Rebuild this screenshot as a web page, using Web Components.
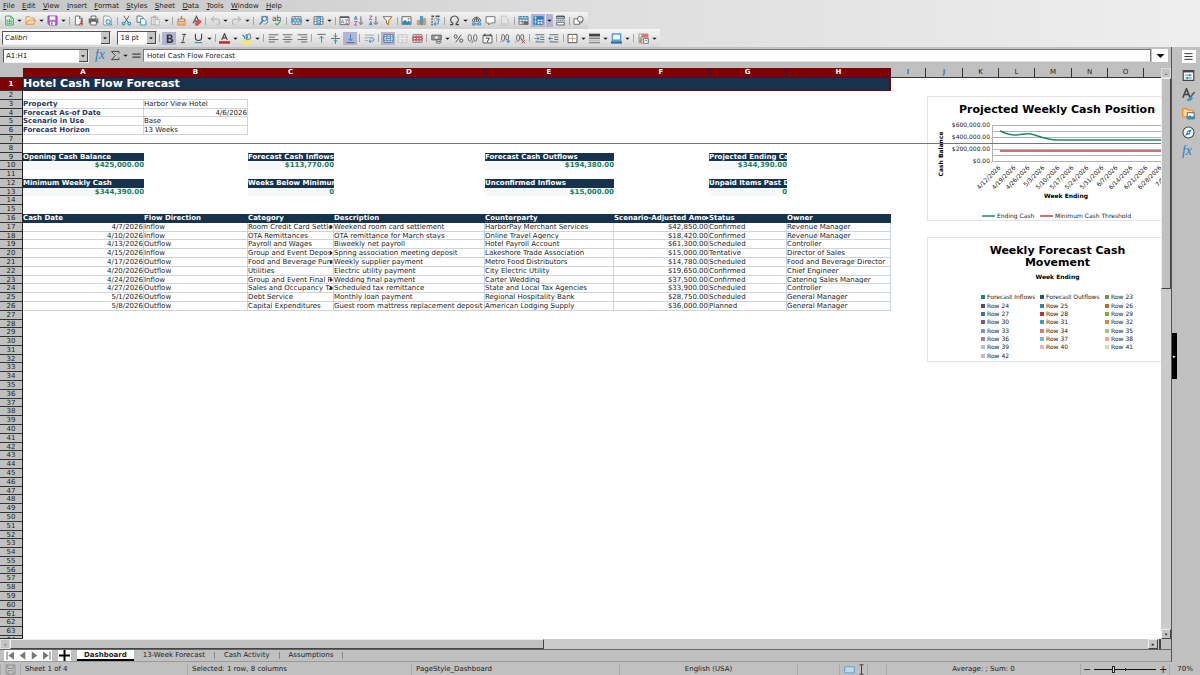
<!DOCTYPE html>
<html lang="en">
<head>
<meta charset="utf-8">
<title>Hotel Cash Flow Forecast</title>
<style>
html,body{height:100%;margin:0}
body{font:7px/8px "DejaVu Sans",sans-serif;color:#1c1c1c;background:#c0c0c0;overflow:hidden}
</style>
</head>
<body>
<calc-app>
  <menu-bar slot="top"></menu-bar>
  <tool-bar slot="top" kind="standard"></tool-bar>
  <tool-bar slot="top" kind="formatting"></tool-bar>
  <formula-bar></formula-bar>
  <sheet-pane>
    <sheet-grid></sheet-grid>
    <line-chart slot="object" class="first"></line-chart>
    <legend-chart slot="object" class="second"></legend-chart>
  </sheet-pane>
  <sheet-tabs></sheet-tabs>
  <side-bar slot="side"></side-bar>
  <status-bar slot="bottom"></status-bar>
</calc-app>
<script>
const S='fill="none" stroke="#555" stroke-width="1.2"';
const B='fill="none" stroke="#1e8bcd" stroke-width="1.3"';
const grid=(c='#555')=>`<path d="M1.5 2.5h13v11h-13zM1.5 6h13M1.5 9.7h13M6 2.5v11M10.3 2.5v11" fill="#fff" stroke="${c}" stroke-width="1.1"/>`;
const ICONS={
caret:'<path d="M3 6h10l-5 5z" fill="#111"/>',
new:'<path d="M2.5 1.500h7.500l3.500 3.500v9.500h-11z" fill="#fff" stroke="#3a9d4f" stroke-width="1.400"/><path d="M10 1.500v3.500h3.500" fill="none" stroke="#3a9d4f"/><path d="M4.500 7h7v5.500h-7zM4.500 9.700h7M8 7v5.500" fill="#dff3e2" stroke="#3a9d4f"/>',
open:'<path d="M1.500 13.500v-11h5l1.500 2h5v3" fill="#fff" stroke="#ed8733" stroke-width="1.400"/><path d="M1.500 13.500l3-6h11l-3 6z" fill="#fbdc9f" stroke="#ed8733" stroke-width="1.300"/>',
save:'<path d="M1.500 1.500h13v13h-11l-2-2z" fill="#b96bcb" stroke="#8e3fa5" stroke-width="1.400"/><path d="M4 2h8v5h-8z" fill="#fff"/><path d="M4.500 10h7v4.500h-7z" fill="#fff"/><path d="M6 11h2v3h-2z" fill="#8e3fa5"/>',
pdf:`<path d="M3.500 1.500h6l4 4v9h-10z" fill="#fff" stroke="#666" stroke-width="1.200"/><path d="M9.500 1.500v4h4" ${S}/><path d="M8 14c3-1 5-4 4.500-6.500c-2 3-.5 5 2 6" fill="none" stroke="#d62f3a" stroke-width="1.500"/>`,
print:`<path d="M4.500 5v-3.500h7v3.500" fill="#fff" stroke="#555" stroke-width="1.300"/><path d="M1 5h14v7h-14z" fill="#666"/><path d="M4 9h8v5.500h-8z" fill="#fff" stroke="#555" stroke-width="1.200"/><path d="M12 7h1.500" stroke="#fff"/>`,
preview:`<path d="M2.500 1.500h7l4 4v9h-11z" fill="#fff" stroke="#888" stroke-width="1.200"/><circle cx="9" cy="10" r="3.200" fill="#d6ecfa" stroke="#1e8bcd" stroke-width="1.400"/><path d="M11.300 12.300l3 3" ${B}/>`,
cut:'<path d="M4 1l6.500 10M12 1l-6.500 10" stroke="#555" stroke-width="1.300"/><circle cx="3.700" cy="12.500" r="2" fill="none" stroke="#1e8bcd" stroke-width="1.500"/><circle cx="12" cy="12.500" r="2" fill="none" stroke="#1e8bcd" stroke-width="1.500"/>',
copy:'<path d="M1.500 1.500h6l2 2v7h-8z" fill="#fff" stroke="#555" stroke-width="1.200"/><path d="M6.500 5.500h5l3 3v6h-8z" fill="#fff" stroke="#1e8bcd" stroke-width="1.300"/>',
paste:'<path d="M2 3h9v11h-9zM5 1.500h3v2.500h-3z" fill="#ddd" stroke="#aaa" stroke-width="1.200"/><path d="M7.500 6.500h6v8h-6z" fill="#eee" stroke="#b4b4b4" stroke-width="1.200"/>',
brush:'<path d="M6.800 1.500h2.400v4.500h-2.400z" fill="#ed8733"/><path d="M3 6h10v3h-10z" fill="#fff" stroke="#555"/><path d="M2.500 9.500h11v5h-11z" fill="#f9c58c" stroke="#ed8733" stroke-width="1.300"/><path d="M5 14v-2M8 14v-2M11 14v-2" stroke="#ed8733"/>',
clear:'<path d="M3 12l5-10l3 7M4.500 9h4" fill="none" stroke="#555" stroke-width="1.700"/><path d="M6 12.500l5-6l4 3l-5 5.500h-3z" fill="#e2525b" stroke="#c9303b"/>',
undo:'<path d="M6 2l-4 4l4 4M2.500 6h7a4 4 0 0 1 1 8" fill="none" stroke="#b8b8b8" stroke-width="1.500"/>',
redo:'<path d="M10 2l4 4l-4 4M13.500 6h-7a4 4 0 0 0-1 8" fill="none" stroke="#b8b8b8" stroke-width="1.500"/>',
find:`<path d="M5.500 12v-10h8.500v9" fill="#fff" stroke="#666" stroke-width="1.100"/><circle cx="9.500" cy="5.500" r="3.300" fill="#d6ecfa" stroke="#1e6ea8" stroke-width="1.300"/><path d="M7.500 8l-5.500 6" stroke="#1e8bcd" stroke-width="1.800"/><path d="M10.500 14l3.500-4" ${S}/>`,
spell:'<text x="0" y="9" font-family="DejaVu Sans" font-size="11" fill="#444">ab</text><path d="M5 12l2.500 2.500l5-5.500" fill="none" stroke="#3aa757" stroke-width="1.600"/>',
rows:grid()+'<path d="M1 6h14v4h-14z" fill="#58b1e6" stroke="#1e8bcd"/><path d="M6 6v4M10.300 6v4" stroke="#fff"/>',
cols:grid()+'<path d="M6 2h4.500v12h-4.500z" fill="#58b1e6" stroke="#1e8bcd"/><path d="M6 6h4M6 10h4" stroke="#fff"/>',
sort:`<path d="M1.500 2.500h13v11.500h-13z" fill="#fff" stroke="#555" stroke-width="1.200"/><path d="M1.500 3.500h13" stroke="#555" stroke-width="2"/><path d="M3 12l2-5.500l2 5.500M3.700 10.500h2.600" fill="none" stroke="#1e8bcd"/><path d="M9 7h4l-4 5h4" fill="none" stroke="#b14ac0" stroke-width="1.200"/>`,
asc:`<path d="M2 7l2-5.500l2 5.500M2.700 5.500h2.600" ${B}/><path d="M2 9.500h4l-4 5h4" fill="none" stroke="#b14ac0" stroke-width="1.300"/><path d="M11.500 2v11M8.500 10.500l3 3.500l3-3.500" ${S}/>`,
desc:`<path d="M2 15l2-5.500l2 5.500M2.700 13.500h2.600" ${B}/><path d="M2 1.500h4l-4 5h4" fill="none" stroke="#b14ac0" stroke-width="1.300"/><path d="M11.500 2v11M8.500 10.500l3 3.500l3-3.500" ${S}/>`,
filter:'<path d="M1.500 2.500h13l-5 6v5.500l-3-2v-3.500z" fill="#fff" stroke="#666" stroke-width="1.300"/><path d="M14 3l-4.500 5.500v5.500l-2-1.500" fill="none" stroke="#ed8733" stroke-width="1.800"/>',
image:'<path d="M1.500 2.500h13v11h-13z" fill="#fff" stroke="#555" stroke-width="1.300"/><path d="M2 13v-3l4-3l3 3l2-2l3 3v2z" fill="#1e8bcd"/><circle cx="11" cy="5.500" r="1.500" fill="#ed8733"/>',
chart:'<path d="M2 8h3v6h-3z" fill="#f0a030" stroke="#d98212"/><path d="M6.500 2h3v12h-3z" fill="#4aa3df" stroke="#1e7fc0"/><path d="M11 5h3v9h-3z" fill="#ef9b44" stroke="#d98212"/>',
pivot:'<path d="M2 2h4M8 2h6M2 6h2M2 10h2M2 14h2" stroke="#555" stroke-width="2.200"/><path d="M6 13h6v-7M9.500 8l2.500-3l2.500 3M8.500 10.500l-3 2.500l3 2.500" fill="none" stroke="#1e8bcd" stroke-width="1.300"/><path d="M6 5h4v4h-4z" fill="#eee" stroke="#aaa"/>',
omega:`<path d="M1.500 14h4v-2a5.600 5.600 0 1 1 5 0v2h4" fill="none" stroke="#444" stroke-width="1.600"/>`,
link:`<path d="M2 9a6 6 0 0 1 12 0z" fill="#fff" stroke="#555" stroke-width="1.200"/><path d="M8 3v6M3 6h10M5 9q0-4 3-6q3 2 3 6" ${S}/><path d="M2 11.500h4v3h-4zM10 11.500h4v3h-4zM5 13h6" ${B}/>`,
comment:'<path d="M1.500 2.500h13v9h-6l-3 3v-3h-4z" fill="#fff" stroke="#666" stroke-width="1.300"/>',
hf:'<path d="M3.500 1.500h6l3.500 3.500v9.500h-9.500z" fill="#e6e6e6" stroke="#bbb" stroke-width="1.200"/><path d="M5 12h6" stroke="#bbb"/>',
area:grid()+'<path d="M1 2h14v4h-14z" fill="#1e8bcd"/><path d="M1 4h14M6 2v4M10.300 2v4" stroke="#fff" stroke-width=".8"/><path d="M8 10h7v4h-7z" fill="#666"/>',
freeze:grid('#2a5a8a')+'<path d="M1 2h5v12h-5zM1 2h14v4h-14z" fill="#1e7fd0"/><path d="M1 4h5M3.500 2v12M1 10h5" stroke="#fff" stroke-width=".8"/>',
split:'<path d="M2.500 1.500h11v4h-11zM2.500 10.500h11v4h-11z" fill="#fff" stroke="#555" stroke-width="1.300"/><path d="M2 2.500h12" stroke="#555" stroke-width="2"/><path d="M1 8h14" stroke="#1e8bcd" stroke-width="1.200" stroke-dasharray="2 1"/>',
shapes:'<path d="M1.500 5.500h8v8h-8z" fill="#fff" stroke="#666" stroke-width="1.300"/><circle cx="10.500" cy="6" r="4.200" fill="#eee" stroke="#666" stroke-width="1.300"/><path d="M7 14l6-3l2-4" fill="none" stroke="#666"/>',
bold:'<path d="M4 2h5q3.500.3 3.500 3.200q0 2-2 2.800q3 .7 3 3.300q0 3-4 3.200h-5.500zM6.500 4v3h2.200q1.500-.2 1.500-1.500t-1.500-1.500zM6.500 9v3.500h2.500q1.800-.2 1.800-1.800t-1.800-1.700z" fill="#333" fill-rule="evenodd"/>',
italic:'<path d="M6 2h6M4 14h6M9.300 2l-2.600 12" fill="none" stroke="#444" stroke-width="1.400"/>',
under:'<path d="M3.500 1v6q0 4 4.500 4t4.500-4v-6" fill="none" stroke="#444" stroke-width="1.600"/><path d="M2.500 14h11" stroke="#1e8bcd" stroke-width="1.600"/>',
fcolor:'<path d="M4 10l4-9l4 9M5.500 7h5" fill="none" stroke="#444" stroke-width="1.700"/><path d="M0 12h16v3.500h-16z" fill="#c9211e"/>',
hcolor:'<path d="M7 3l6-2l1.500 7l-6 2z" fill="#cfe6f7" stroke="#555"/><path d="M2 3q3 1 4 6M9 3v5" fill="none" stroke="#1e8bcd" stroke-width="1.600"/><path d="M0 11.500h16v4h-16z" fill="#ffef3a"/>',
left:`<path d="M1 2.500h14M1 6h9M1 9.500h14M1 13h9" ${S}/>`,
center:`<path d="M1 2.500h14M3.500 6h9M1 9.500h14M3.500 13h9" ${S}/>`,
right:`<path d="M1 2.500h14M6 6h9M1 9.500h14M6 13h9" ${S}/>`,
top:`<path d="M2 2h12" ${S}/><path d="M8 14v-9M5 8l3-3.500l3 3.500" ${B}/>`,
middle:`<path d="M1.500 8h13" ${S}/><path d="M8 0v6M5.500 3.500l2.500 3l2.500-3M8 16v-6M5.500 12.500l2.500-3l2.500 3" ${B}/>`,
bottom:`<path d="M2 14h12" ${S}/><path d="M8 2v9M5 8l3 3.500l3-3.500" ${B}/>`,
wrap:`<path d="M1 3h14M1 7h7M1 11h5" fill="none" stroke="#999" stroke-width="1.200"/><path d="M8 7h4q2.500 0 2.500 2.500t-2.500 2.500h-4M10 9.500l-2.500 2.500l2.500 2.500" ${B}/>`,
mergec:`${grid()}<path d="M1.500 5.500h13v5h-13z" fill="#fff" stroke="#1e8bcd" stroke-width="1.300"/><path d="M4 8h8M6 6.500l-2 1.500l2 1.500M10 6.500l2 1.500l-2 1.500" ${B}/>`,
merge:'<path d="M1.500 2.500h13v11h-13zM1.500 6h13M1.500 10h13M8 2.500v3.500M8 10v3.500" fill="#f4f4f4" stroke="#bbb" stroke-width="1.100"/>',
unmerge:grid()+'<path d="M1.500 6h13v4h-13zM6 6v4M10.300 6v4" fill="#fff" stroke="#e0333c" stroke-width="1.500"/>',
money:'<path d="M1 3h14v7h-14z" fill="#999" stroke="#444"/><circle cx="8" cy="6.500" r="2" fill="#eee"/><ellipse cx="11" cy="11" rx="3.500" ry="1.500" fill="#ddd" stroke="#444"/><ellipse cx="11" cy="13.500" rx="3.500" ry="1.500" fill="#ddd" stroke="#444"/>',
percent:'<circle cx="4" cy="5" r="2.300" fill="none" stroke="#444" stroke-width="1.300"/><circle cx="12" cy="11" r="2.300" fill="none" stroke="#444" stroke-width="1.300"/><path d="M12 2.500l-8 11" stroke="#444" stroke-width="1.300"/>',
number:`<ellipse cx="4" cy="7" rx="2.500" ry="5" ${S}/><ellipse cx="12" cy="7" rx="2.500" ry="5" ${S}/><path d="M8.300 11l-1.300 3.500" ${S}/>`,
date:'<path d="M1.500 3h13v11.500h-13z" fill="#fff" stroke="#555" stroke-width="1.300"/><path d="M1.500 4h13M4 1v3M12 1v3" stroke="#555" stroke-width="1.800"/><path d="M5.500 7.500h5l-3 6" fill="none" stroke="#333" stroke-width="1.400"/>',
adddec:`<ellipse cx="4.500" cy="7" rx="2.200" ry="5" ${S}/><ellipse cx="10.500" cy="6" rx="2.200" ry="4" ${S}/><path d="M1 12v1.500" ${S}/><path d="M12 9v6M9 12h6" ${B}/>`,
deldec:`<ellipse cx="4.500" cy="7" rx="2.200" ry="5" ${S}/><ellipse cx="10.500" cy="6" rx="2.200" ry="4" ${S}/><path d="M1 12v1.500" ${S}/><path d="M9.500 10l5 5M14.500 10l-5 5" stroke="#d62f3a" stroke-width="1.400"/>`,
indent:`<path d="M2 2.500h13M9 6h6M9 9.500h6M2 13h13" ${S}/><path d="M1 8h6M4.500 5l3 3l-3 3" ${B}/>`,
outdent:`<path d="M2 2.500h13M9 6h6M9 9.500h6M2 13h13" ${S}/><path d="M1 8h6M4 5l-3 3l3 3" ${B}/>`,
borders:'<path d="M1.500 2h13v12h-13z" fill="#fff" stroke="#444" stroke-width="1.300"/><path d="M8 2v12M1.500 8h13" stroke="#aaa"/><path d="M8 5v6M5 8h6" stroke="#ed8733"/>',
lines:'<path d="M0 3h16" stroke="#444" stroke-width="4"/><path d="M0 7.500h16" stroke="#555" stroke-width="1.500" /><path d="M0 10.500h16" stroke="#777" stroke-dasharray="2 1"/><path d="M0 14h16" stroke="#888" stroke-width="2"/>',
bcolor:'<path d="M2 1.500h12v9h-12z" fill="#eaf3fa" stroke="#5b9bd0" stroke-width="2"/><path d="M0 12h16v3.500h-16z" fill="#2a6fb0"/>',
cond:'<path d="M1.500 1.500h13v13h-13zM5.500 1.500v13M1.500 6h13M1.500 10h13M10 1.500v13" fill="#fff" stroke="#777"/><path d="M5.500 1.500h9v4.500h-9z" fill="#ef6a6a"/><path d="M2 6h3v4h-3z" fill="#7fc97f"/><path d="M2 10h3v4h-3z" fill="#ef6a6a"/><path d="M8 8h7v7h-7z" fill="#fff" stroke="#555"/><path d="M9.500 12l2-2l2 2" fill="none" stroke="#555"/>',
fx:'<text x="0" y="12" font-family="Liberation Serif" font-style="italic" font-size="17" fill="#1e80c8">fx</text>',
sum:'<path d="M13 5v-3h-11l6 6l-6 6h11v-3" fill="none" stroke="#444" stroke-width="1.400"/>',
equal:'<path d="M2 6h12M2 10.500h12" stroke="#444" stroke-width="1.800"/>',
burger:'<path d="M3 4.500h10M3 8h10M3 11.500h10" stroke="#333" stroke-width="1.200"/>',
props:'<path d="M1.500 2h13v12h-13z" fill="#fff" stroke="#444" stroke-width="1.400"/><path d="M1.500 3h13" stroke="#444" stroke-width="2.500"/><path d="M4 7.500h8M4 11h8" stroke="#1e8bcd" stroke-width="1.200"/><path d="M9.500 6v3M6.500 9.500v3" stroke="#1e8bcd" stroke-width="1.500"/>',
styles:'<path d="M1 12l4.500-11l4.500 11M2.500 8h6" fill="none" stroke="#444" stroke-width="2"/><path d="M15.500 5l-5 6" stroke="#555" stroke-width="1.800"/><path d="M6 15q3 0 3-3l2-1.500l1.500 1.500q0 4-6.500 3z" fill="#4aa3df" stroke="#1e7fc0"/>',
gallery:'<path d="M1 12v-10h5l1.500 2h6v3" fill="#fbdc9f" stroke="#ed8733" stroke-width="1.400"/><path d="M1 4v8h5" fill="#fbdc9f" stroke="#ed8733" stroke-width="1.400"/><path d="M6.500 7h8.500v7.500h-8.500z" fill="#fff" stroke="#444"/><path d="M7 14v-2l3-2l2 2l3-1v3z" fill="#1e8bcd"/>',
compass:'<circle cx="8" cy="8" r="6.800" fill="#fff" stroke="#444" stroke-width="1.300"/><path d="M12 4l-2.500 6l-5.500 2l2.500-6z" fill="#1e8bcd"/><circle cx="8" cy="8" r="1" fill="#fff"/>',
first:'<path d="M3 2v12" stroke="#777" stroke-width="1.600"/><path d="M13 2v12l-8-6z" fill="#777"/>',
prev:'<path d="M12 2v12l-8-6z" fill="#777"/>',next:'<path d="M4 2v12l8-6z" fill="#777"/>',
last:'<path d="M13 2v12" stroke="#777" stroke-width="1.600"/><path d="M3 2v12l8-6z" fill="#777"/>',
plus:'<path d="M8 0v16M0 8h16" stroke="#000" stroke-width="2.800"/>',
saved:'<path d="M1.500 1.500h13v13h-13zM4 1.500v5h8v-5M4.500 14.500v-5h7v5" fill="#c8c8c8" stroke="#888" stroke-width="1.300"/>',
mode:'<path d="M1 4h14v9h-14z" fill="#c9d6df" stroke="#4aa3df" stroke-width="1.400"/>',
beam:'<path d="M5 1h6M8 1v14M5 15h6" fill="none" stroke="#444" stroke-width="1.500"/>'
};
function define(name,css,html){
  customElements.define(name,class extends HTMLElement{
    connectedCallback(){
      if(this.shadowRoot)return;
      const root=this.attachShadow({mode:'open'});
      root.innerHTML=`<style>:host,*{box-sizing:border-box}${css}</style>${typeof html==='function'?html(this):html}`;
    }
  });
}
define('calc-icon',`:host{display:inline-block;width:11px;height:11px}svg{display:block;width:100%;height:100%}`,
 el=>`<svg viewBox="0 0 16 16" aria-hidden="true">${ICONS[el.getAttribute('name')]}</svg>`);
define('tool-button',`:host{display:block;flex:none;width:14px;height:13px}
 :host([narrow]){width:7px}
 :host([narrow]) calc-icon{width:7px;height:7px}
 :host([large]) calc-icon{width:13px;height:13px}
 button{all:unset;box-sizing:border-box;display:flex;width:100%;height:100%;align-items:center;justify-content:center;cursor:default}
 :host([on]) button{background:#b4b3d2}:host([raised]) button{background:#fff}`,
 el=>`<button type="button" aria-label="${el.getAttribute('label')||el.getAttribute('icon')}"><calc-icon name="${el.getAttribute('icon')}"></calc-icon></button>`);
define('combo-box',`:host{display:flex;flex:none;height:14px;background:#fff;border:1px solid #555;border-right-color:#eee;border-bottom-color:#eee}
 select,input{all:unset;box-sizing:border-box;flex:1;min-width:0;font:inherit;line-height:12px;padding-left:2px;color:#111;background:#fff}
 span{width:9px;flex:none;background:#c6c6c6;border-right:1px solid #444;border-bottom:1px solid #444;display:flex;align-items:center;justify-content:center}
 calc-icon{width:6px;height:6px}`,
 el=>(el.hasAttribute('editable')?`<input aria-label="${el.getAttribute('label')}" value="${el.getAttribute('value')}">`
   :`<select aria-label="${el.getAttribute('label')}"><option>${el.getAttribute('value')}</option></select>`)+`<span><calc-icon name="caret"></calc-icon></span>`);
define('menu-bar',`:host{display:block}nav{display:flex;justify-content:space-between;width:285px;height:12px;padding:0 3px;align-items:center}
 button{all:unset;line-height:10px}button::first-letter{text-decoration:underline}`,
 `<nav>${'File Edit View Insert Format Styles Sheet Data Tools Window Help'.split(' ').map(t=>`<button type="button">${t}</button>`).join('')}</nav>`);
const BARS={
 standard:'new v open v save v | pdf print preview | cut copy paste v | brush clear | undo v redo v | find spell | rows v cols v | sort asc desc filter | image chart pivot | omega v link comment hf | area freeze* v* split | shapes',
 formatting:'FONT SIZE | bold* italic under v | fcolor v hcolor v | left center right | top middle bottom* | wrap | mergec* merge unmerge | money v percent number date | adddec deldec | indent outdent | borders v lines v bcolor v | cond v'
};
define('tool-bar',`:host{display:block}
 div{display:flex;justify-content:space-between;align-items:center;padding:0 2px;height:17px;width:588px;background:linear-gradient(#f4f4f4,#cfcfcf)}
 div.formatting{width:660px;height:18px;background:linear-gradient(#f6f6f6,#d6d6d6)}
 i{flex:none;width:4px;height:8px;display:flex;justify-content:center}i::before{content:"";width:1px;background:#a5a5a5}
 .font{width:109px;font-style:italic}.size{width:40px;margin-left:6px}`,
 el=>{const k=el.getAttribute('kind');return `<div class="${k}" role="toolbar">`+BARS[k].split(' ').map(t=>{
  if(t==='|')return '<i></i>';
  if(t==='FONT')return '<combo-box class="font" label="Font name" value="Calibri"></combo-box>';
  if(t==='SIZE')return '<combo-box class="size" label="Font size" value="18 pt"></combo-box>';
  const on=t.endsWith('*')?'on':'';t=t.replace('*','');
  return t==='v'?`<tool-button narrow icon="caret" label="More" ${on}></tool-button>`:`<tool-button icon="${t}" ${on}></tool-button>`;
 }).join('')+'</div>'});
define('formula-bar',`:host{display:flex;height:21px;background:#c0c0c0;padding:2px 3px 0;align-items:flex-start}
 combo-box{width:86px;margin-right:5px;background:#fff}
 input{all:unset;flex:1;min-width:0;box-sizing:border-box;height:13px;line-height:11px;padding-left:3px;background:#fff;border:1px solid #777;border-bottom-color:#ddd;font:inherit}
 tool-button.drop{width:16px;margin-left:1px}`,
 `<combo-box editable label="Name box" value="A1:H1"></combo-box><tool-button large icon="fx" label="Function wizard"></tool-button><tool-button icon="sum" label="Sum"></tool-button><tool-button narrow icon="caret" label="Sum functions"></tool-button><tool-button icon="equal" label="Formula"></tool-button><input aria-label="Formula" value="Hotel Cash Flow Forecast"><tool-button large class="drop" raised icon="caret" label="Expand formula bar"></tool-button>`);
define('calc-app',`:host{display:flex;flex-direction:column;height:100vh;min-height:0}
 header{background:linear-gradient(to right,#c6c6c6,#dedede 50%,#eee)}
 main{flex:1;min-height:0;display:flex}
 section{flex:1;min-width:0;display:flex;flex-direction:column}`,
 `<header><slot name="top"></slot></header><main><section><slot></slot></section><slot name="side"></slot></main><slot name="bottom"></slot>`);
define('sheet-pane',`:host{flex:1;min-height:0;display:grid;grid-template-columns:minmax(0,1fr) 10px;grid-template-rows:minmax(0,1fr) 10px;background:#c0c0c0}
 .view{position:relative;overflow:hidden;background:#fff}
 ::slotted(.first){position:absolute;left:927px;top:28px}
 ::slotted(.second){position:absolute;left:927px;top:169px}
 .v,.h{display:flex;background:#cbcbcb}.v{flex-direction:column}
 .b{flex:none;width:10px;height:10px;background:#c4c4c4;border:1px solid #eee;border-right-color:#444;border-bottom-color:#444;display:flex;align-items:center;justify-content:center;font-size:5px;line-height:5px;color:#222}
 .t{background:#c0c0c0;border:1px solid #eee;border-right-color:#444;border-bottom-color:#444}
 .v .t{height:37%}.v .s,.h .s{flex:1}.h .t{width:46%}
 .grip{width:3px;background:#444;border-left:1px solid #ccc}
 .off{color:#888;border-color:#ddd}`,
 `<div class="view"><slot></slot><slot name="object"></slot></div>
 <div class="v"><div class="b off">▴</div><div class="t"></div><div class="s"></div><div class="b">▾</div></div>
 <div class="h"><div class="b off">◂</div><div class="t"></div><div class="s"></div><div class="b">▸</div><div class="grip"></div></div>`);
const DATA=[
['4/7/2026','Inflow','Room Credit Card Settle','Weekend room card settlement','HarborPay Merchant Services','$42,850.00','Confirmed','Revenue Manager'],
['4/10/2026','Inflow','OTA Remittances','OTA remittance for March stays','Online Travel Agency','$18,420.00','Confirmed','Revenue Manager'],
['4/13/2026','Outflow','Payroll and Wages','Biweekly net payroll','Hotel Payroll Account','$61,300.00','Scheduled','Controller'],
['4/15/2026','Inflow','Group and Event Depos','Spring association meeting deposit','Lakeshore Trade Association','$15,000.00','Tentative','Director of Sales'],
['4/17/2026','Outflow','Food and Beverage Purc','Weekly supplier payment','Metro Food Distributors','$14,780.00','Scheduled','Food and Beverage Director'],
['4/20/2026','Outflow','Utilities','Electric utility payment','City Electric Utility','$19,650.00','Confirmed','Chief Engineer'],
['4/24/2026','Inflow','Group and Event Final P','Wedding final payment','Carter Wedding','$37,500.00','Confirmed','Catering Sales Manager'],
['4/27/2026','Outflow','Sales and Occupancy Ta','Scheduled tax remittance','State and Local Tax Agencies','$33,900.00','Scheduled','Controller'],
['5/1/2026','Outflow','Debt Service','Monthly loan payment','Regional Hospitality Bank','$28,750.00','Scheduled','General Manager'],
['5/8/2026','Outflow','Capital Expenditures','Guest room mattress replacement deposit','American Lodging Supply','$36,000.00','Planned','General Manager']];
const CLIPPED=[0,3,4,6,7];
function rowCells(n){
  const kpi=(cls,v)=>v.map(t=>t?`<td class="${cls}">${t}</td>`:'<td></td>').join('');
  if(n===1)return '<td class="title" colspan="8">Hotel Cash Flow Forecast</td>';
  if(n===2)return '<td class="rule"></td><td class="rule"></td>';
  const p={3:['Property','Harbor View Hotel'],4:['Forecast As-of Date','4/6/2026'],5:['Scenario in Use','Base'],6:['Forecast Horizon','13 Weeks']}[n];
  if(p)return `<td class="line name">${p[0]}</td><td class="line${n===4?' num':''}">${p[1]}</td>`;
  if(n===7)return '<td class="freeze"></td>';
  if(n===9)return kpi('head',['Opening Cash Balance','','Forecast Cash Inflows','','Forecast Cash Outflows','','Projected Ending Ca']);
  if(n===10)return kpi('kpi',['$425,000.00','','$113,770.00','','$194,380.00','','$344,390.00']);
  if(n===12)return kpi('head',['Minimum Weekly Cash','','Weeks Below Minimum','','Unconfirmed Inflows','','Unpaid Items Past D']);
  if(n===13)return kpi('kpi',['$344,390.00','','0','','$15,000.00','','0']);
  if(n===16)return ['Cash Date','Flow Direction','Category','Description','<span class="typo">Counterparty</span>','Scenario-Adjusted Amo','Status','Owner'].map((t,i)=>`<td class="head${i===5?' more':''}">${t}</td>`).join('');
  if(n>16&&n<27)return DATA[n-17].map((t,i)=>`<td class="line${i===0||i===5?' num':''}${i===2&&CLIPPED.includes(n-17)?' more':''}">${t}</td>`).join('');
  return '';
}
define('sheet-grid',`:host{display:block;height:100%}
 table{display:grid;height:100%;grid-template-columns:23px 121px 104px 86px 151px 129px 95px 78px 104px 35px 37px 36px 36px 37px 36px 36px minmax(0,1fr);grid-template-rows:10px 13px repeat(62,minmax(0,1fr)) 3px}
 thead,tbody,tr{display:contents}
 th,td{padding:0;overflow:hidden;white-space:nowrap;min-width:0;min-height:0;line-height:9px;font-weight:400;text-align:left}
 thead th{background:#c0c0c0;text-align:center;border-right:1px solid #333;border-bottom:1px solid #333}
 thead th.sel{background:#800000;color:#fff;font-weight:700;border-color:#3a1040}
 thead th:last-child,thead th:first-child{border-right:0}
 tbody th{grid-column:1;background:#c0c0c0;text-align:center;border-right:1px solid #222;border-bottom:1px solid #333;line-height:8px}
 tbody th.sel{background:#800000;color:#fff;font-weight:700;line-height:12px}
 .title{grid-column:2/span 8;background:#17324d;color:#fff;font-weight:700;font-size:11px;line-height:12px;border:1px solid #800000;border-width:0 2px 1px 0}
 .line{border-right:1px solid #ccd5dc;border-bottom:1px solid #ccd5dc}
 .rule{border-bottom:1px solid #ccd5dc}
 .name{color:#1f3a5f;font-weight:700}
 .num{text-align:right}
 .head{background:#17324d;color:#fff;font-weight:700}
 .kpi{background:#f5f9fa;color:#188062;font-weight:700;text-align:right}
 .freeze{grid-column:2/-1;border-bottom:1px solid #777;position:relative;z-index:2}
 .typo{display:inline-block;height:8px;line-height:9px;border-bottom:1px dotted #e33;vertical-align:top}
 .more{position:relative}
 .more::after{content:"";position:absolute;right:0;top:2px;border:2px solid transparent;border-left:3px solid #222;border-right:0}
 .head.more::after{border-left-color:#fff}`,
 ()=>{let h='<table><thead><tr><th></th>'+'ABCDEFGHIJKLMNO'.split('').map((c,i)=>`<th${i<8?' class="sel"':''} scope="col">${c}</th>`).join('')+'<th></th></tr></thead><tbody>';
  for(let n=1;n<=64;n++)h+=`<tr><th scope="row"${n===1?' class="sel"':''}>${n}</th>${rowCells(n)}</tr>`;
  return h+'</tbody></table>'});
define('line-chart',`:host{display:block;width:261px;height:125px;background:#fff;border:1px solid #e4e4e4}svg{display:block;width:259px;height:123px}text{font-family:"DejaVu Sans",sans-serif}`,
 ()=>{let g='';[28,34,40,46,52,58,64].forEach(y=>g+=`<path d="M64 ${y}h196" stroke="#b3b3b3"/>`);
  let l='';['4/12/2026','4/19/2026','4/26/2026','5/3/2026','5/10/2026','5/17/2026','5/24/2026','5/31/2026','6/7/2026','6/14/2026','6/21/2026','6/28/2026','7/5/2026'].forEach((t,i)=>{const x=73+Math.round(i*14.65);l+=`<text transform="translate(${x} 71) rotate(-45)" text-anchor="end">${t}</text>`});
  return `<svg viewBox="0 0 259 123" role="img" aria-label="Projected Weekly Cash Position">
  <text x="129" y="16" text-anchor="middle" font-size="11" font-weight="700">Projected Weekly Cash Position</text>
  <g shape-rendering="crispEdges">${g}<path d="M64 28v36" stroke="#b3b3b3"/></g>
  <g font-size="6" fill="#222"><text x="62" y="30" text-anchor="end">$600,000.00</text><text x="62" y="42" text-anchor="end">$400,000.00</text><text x="62" y="54" text-anchor="end">$200,000.00</text><text x="62" y="66" text-anchor="end">$0.00</text>${l}
  <text x="69" y="121">Ending Cash</text><text x="127" y="121">Minimum Cash Threshold</text></g>
  <text font-size="6" font-weight="700" transform="translate(15 57) rotate(-90)" text-anchor="middle">Cash Balance</text>
  <text x="138" y="101" font-size="6" font-weight="700" text-anchor="middle">Week Ending</text>
  <path d="M72 34C77 36 81 38 87 38S97 36 103 37S117 43 130 43H260M54 119h13" fill="none" stroke="#1b8a6b" stroke-width="1.500"/>
  <path d="M72 54H260M112 119h13" fill="none" stroke="#c0444a" stroke-width="1.500"/></svg>`});
const LEG=[['Forecast Inflows','#1b8a6b'],['Forecast Outflows','#24566b'],['Row 23','#77933c'],['Row 24','#5c4776'],['Row 25','#31859c'],['Row 26','#c0692b'],['Row 27','#3f6fa8'],['Row 28','#b03a3e'],['Row 29','#8ba83f'],['Row 30','#7256a0'],['Row 31','#3c9dbd'],['Row 32','#e0873a'],['Row 33','#7499cb'],['Row 34','#d57a7c'],['Row 35','#a9c473'],['Row 36','#9181b5'],['Row 37','#76b9cf'],['Row 38','#f5a780'],['Row 39','#b8bfe0'],['Row 40','#e3b4c4'],['Row 41','#cfe0b0'],['Row 42','#bdb5da']];
define('legend-chart',`:host{display:block;width:261px;height:125px;background:#fff;border:1px solid #e4e4e4;color:#000}
 h2{margin:7px 0 0;font-size:11px;line-height:12px;text-align:center;padding:0 50px}
 p{margin:4px 0 12px;font-size:6px;line-height:8px;font-weight:700;text-align:center}
 ul{list-style:none;margin:0 0 0 53px;padding:0;display:grid;grid-template-columns:59px 65px 60px;grid-template-rows:repeat(8,1fr);height:67px;font-size:6px;color:#222}
 li{display:flex;align-items:center;gap:2px;white-space:nowrap;line-height:8px}
 i{width:4px;height:4px;flex:none}`,
 `<h2>Weekly Forecast Cash Movement</h2><p>Week Ending</p><ul>${LEG.map(([t,c])=>`<li><i style="background:${c}"></i>${t}</li>`).join('')}</ul>`);
define('sheet-tabs',`:host{display:flex;height:13px;background:#c0c0c0;border-bottom:1px solid #999;padding-left:4px;border-top:1px solid #666}
 tool-button{width:12px;height:11px}
 .add{width:13px;margin:0 6px}
 button{all:unset;box-sizing:border-box;text-align:center;line-height:11px;height:11px;padding:0 9px}
 button.on{background:#fff;font-weight:700;border-bottom:2px solid #000;padding:0 7px;line-height:10px}
 button:not(.on){border-right:1px solid transparent;border-image:linear-gradient(transparent 25%,#888 25%,#888 75%,transparent 75%) 1}`,
 `<tool-button raised icon="first"></tool-button><tool-button raised icon="prev"></tool-button><tool-button raised icon="next"></tool-button><tool-button raised icon="last"></tool-button><tool-button raised class="add" icon="plus" label="Add sheet"></tool-button><button class="on" type="button">Dashboard</button><button type="button">13-Week Forecast</button><button type="button">Cash Activity</button><button type="button">Assumptions</button>`);
define('side-bar',`:host{display:flex;flex-direction:column;align-items:center;width:29px;flex:none;background:#c0c0c0;border-left:1px solid #555;padding:3px 0 0 5px;gap:6px;position:relative}
 .grip{position:absolute;left:0;top:50%;width:5px;height:46px;margin-top:-22px;padding:0;border:0;background:#000;color:#fff;font-size:5px;line-height:46px}`,
 `${[['burger','Settings'],['props','Properties'],['styles','Styles'],['gallery','Gallery'],['compass','Navigator'],['fx','Functions']].map(([i,l],n)=>`<tool-button large icon="${i}" label="${l}" ${n?'':'raised'}></tool-button>`).join('')}<button class="grip" type="button" aria-label="Hide sidebar">▸</button>`);
define('status-bar',`:host{display:grid;grid-template-columns:20px 167fr 224fr 208fr 178fr 42fr 28fr 19fr 194fr 89fr 31fr;height:13px;background:#c0c0c0}
 div{display:flex;align-items:center;gap:1px;border-left:1px solid #aaa;margin:2px 0 0;padding-left:4px;white-space:nowrap;line-height:9px;min-width:0}
 div:first-child{border:0}.c{justify-content:center;padding:0}.z{padding:0 2px}
 input{appearance:none;flex:1;min-width:0;height:9px;margin:0 2px;background:linear-gradient(#111,#111) 0 4px/100% 1px no-repeat,linear-gradient(#111,#111) 50% 3px/1px 3px no-repeat}
 input::-webkit-slider-thumb{appearance:none;width:3px;height:7px;background:#ddd;border:1px solid #222}
 button{all:unset;width:8px;text-align:center;font-size:10px;line-height:9px}`,
 `<div><calc-icon name="saved"></calc-icon></div><div>Sheet 1 of 4</div><div>Selected: 1 row, 8 columns</div><div>PageStyle_Dashboard</div><div class="c">English (USA)</div><div></div><div><calc-icon name="mode"></calc-icon><calc-icon name="beam"></calc-icon></div><div></div><div class="c">Average: ; Sum: 0</div><div class="z"><button type="button" aria-label="Zoom out">−</button><input type="range" aria-label="Zoom" value="30"><button type="button" aria-label="Zoom in">+</button></div><div class="c">70%</div>`);
</script>
</body>
</html>
